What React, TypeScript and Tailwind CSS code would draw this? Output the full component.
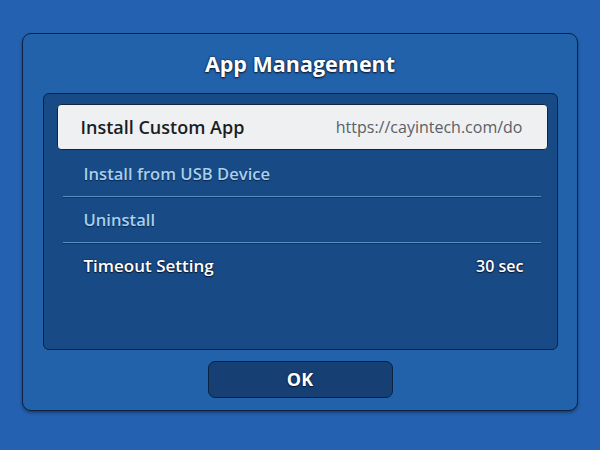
const rows = [
  { label: "Install from USB Device", value: "", dim: true },
  { label: "Uninstall", value: "", dim: true },
  { label: "Timeout Setting", value: "30 sec", dim: false },
];

export default function App() {
  return (
    <div className="h-[450px] w-[600px] bg-[#2461b0] px-[22px] pt-[33px] font-['Open_Sans',sans-serif]">
      <div className="flex h-[378px] flex-col items-center rounded-[9px] border-[1.5px] border-[#0b2241] bg-[#2262aa] shadow-[0_2px_3px_rgba(0,0,0,0.35)]">
        <h1 className="mt-[15px] text-[21.5px] leading-[30px] font-bold text-white [text-shadow:0_0_2px_#0a1a33,0_1px_2px_#0a1a33]">
          App Management
        </h1>
        <div className="mt-[14px] h-[257px] w-[515px] rounded-[6px] border border-[#0b2241] bg-[#184a86] pt-[10px] pr-[9px] pl-[13px]">
          <div className="flex h-[46px] items-center justify-between rounded-[4px] border border-[#15243a] bg-[#eef0f2] pr-[24px] pl-[23px]">
            <span className="text-[18px] font-semibold text-[#1b1d21]">Install Custom App</span>
            <span className="text-[16px] text-[#5b5f66]">https://cayintech.com/do</span>
          </div>
          <div className="h-[2px]" />
          {rows.map((row, i) => (
            <div key={row.label}>
              {i > 0 && (
                <div className="mr-[7px] ml-[6px] h-[2px] border-t border-[#5a90c0] bg-[#10365f]" />
              )}
              <div
                className={
                  "flex h-[44px] items-center justify-between pr-[24px] pl-[27px] font-semibold " +
                  (row.dim
                    ? "text-[16.6px] text-[#a7d0f0] [text-shadow:0_1px_1px_#0b2647]"
                    : "text-[17px] text-white [text-shadow:0_0_2px_#0a1a33,0_1px_1px_#0a1a33]")
                }
              >
                <span>{row.label}</span>
                {row.value && <span className="text-[16px]">{row.value}</span>}
              </div>
            </div>
          ))}
        </div>
        <button className="mt-[11px] h-[37px] w-[185px] rounded-[7px] border border-[#0b2241] bg-[#163f74] text-[18px] font-bold text-white [text-shadow:0_0_2px_#0a1a33,0_1px_1px_#0a1a33]">
          OK
        </button>
      </div>
    </div>
  );
}
